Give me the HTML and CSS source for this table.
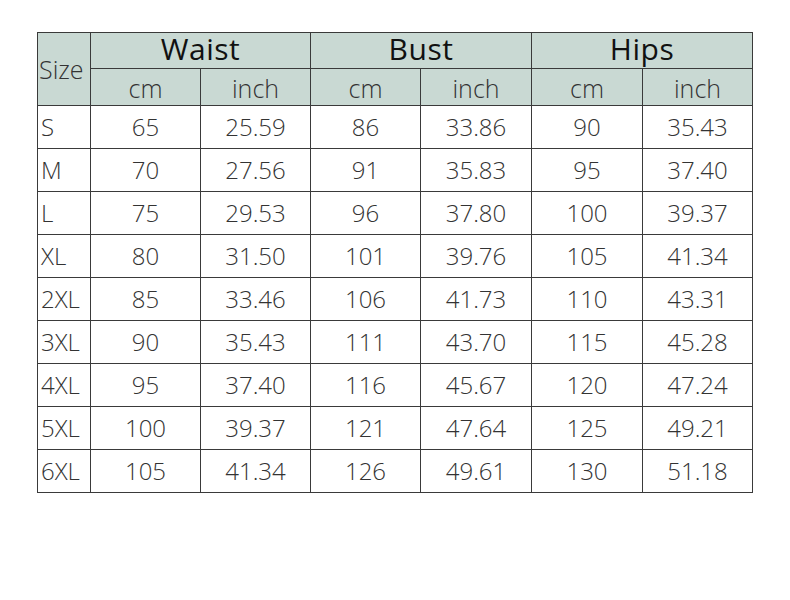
FILE: index.html
```html
<!DOCTYPE html>
<html>
<head>
<meta charset="utf-8">
<link rel="stylesheet" href="styles.css">
</head>
<body>
<table class="size-table">
  <colgroup>
    <col class="c-size">
    <col class="c-val"><col class="c-val">
    <col class="c-val"><col class="c-val2">
    <col class="c-val2"><col class="c-val">
  </colgroup>
  <thead>
    <tr class="h1">
      <th rowspan="2" class="size-head">Size</th>
      <th colspan="2" class="group">Waist</th>
      <th colspan="2" class="group">Bust</th>
      <th colspan="2" class="group">Hips</th>
    </tr>
    <tr class="h2">
      <th>cm</th><th>inch</th>
      <th>cm</th><th>inch</th>
      <th>cm</th><th>inch</th>
    </tr>
  </thead>
  <tbody>
    <tr><td class="sz">S</td><td>65</td><td>25.59</td><td>86</td><td>33.86</td><td>90</td><td>35.43</td></tr>
    <tr><td class="sz">M</td><td>70</td><td>27.56</td><td>91</td><td>35.83</td><td>95</td><td>37.40</td></tr>
    <tr><td class="sz">L</td><td>75</td><td>29.53</td><td>96</td><td>37.80</td><td>100</td><td>39.37</td></tr>
    <tr><td class="sz">XL</td><td>80</td><td>31.50</td><td>101</td><td>39.76</td><td>105</td><td>41.34</td></tr>
    <tr><td class="sz">2XL</td><td>85</td><td>33.46</td><td>106</td><td>41.73</td><td>110</td><td>43.31</td></tr>
    <tr><td class="sz">3XL</td><td>90</td><td>35.43</td><td>111</td><td>43.70</td><td>115</td><td>45.28</td></tr>
    <tr><td class="sz">4XL</td><td>95</td><td>37.40</td><td>116</td><td>45.67</td><td>120</td><td>47.24</td></tr>
    <tr><td class="sz">5XL</td><td>100</td><td>39.37</td><td>121</td><td>47.64</td><td>125</td><td>49.21</td></tr>
    <tr><td class="sz">6XL</td><td>105</td><td>41.34</td><td>126</td><td>49.61</td><td>130</td><td>51.18</td></tr>
  </tbody>
</table>
</body>
</html>
```
FILE: styles.css
```css
html, body {
  margin: 0;
  background: #ffffff;
}
body {
  padding: 32px 0 0 37px;
  font-family: "Open Sans", "Noto Sans", sans-serif;
  color: #2b2b2b;
}
.size-table {
  border-collapse: collapse;
  table-layout: fixed;
  width: 716px;
}
.c-size { width: 53px; }
.c-val { width: 110px; }
.c-val2 { width: 111px; }
.size-table th,
.size-table td {
  border: 1px solid #3a3a3a;
  padding: 0;
  text-align: center;
  vertical-align: middle;
  white-space: nowrap;
}
thead th {
  background: #c9d9d3;
  font-weight: 400;
}
.group {
  height: 32px;
  padding-bottom: 3px !important;
  font-size: 30px;
  font-weight: 500;
  letter-spacing: 0.5px;
  color: #111;
  line-height: 32px;
}
.h2 th {
  height: 34px;
  font-size: 25px;
  font-weight: 300;
  color: #333;
  line-height: 30px;
  padding-top: 2px;
}
.size-head {
  text-align: left !important;
  padding-left: 1px !important;
  font-size: 25px;
  font-weight: 300;
  color: #333;
}
tbody td {
  height: 42px;
  font-size: 24px;
  font-weight: 300;
  color: #333;
  line-height: 30px;
}
tbody td.sz {
  text-align: left;
  padding-left: 3px;
}
```
